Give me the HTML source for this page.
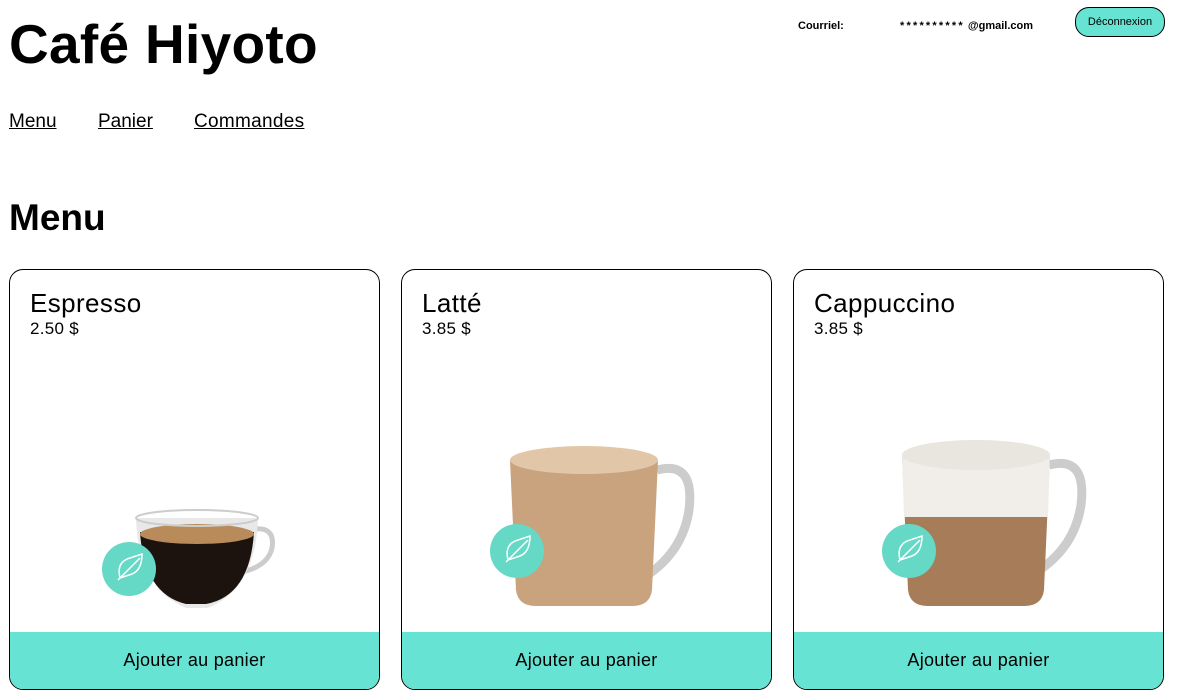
<!DOCTYPE html>
<html><head><meta charset="utf-8"><style>
body{margin:0;background:#fff;font-family:"Liberation Sans",Arial,sans-serif;color:#000;width:1200px;height:700px;overflow:hidden;position:relative}
h1{position:absolute;left:9px;top:12px;margin:0;font-size:55px;font-weight:bold;letter-spacing:0.3px}
.nav{position:absolute;top:111px;left:9px;font-size:19px}
.nav a{color:#000;text-decoration:underline;position:absolute;white-space:nowrap}
h2{position:absolute;left:9px;top:197px;margin:0;font-size:37px;font-weight:bold}
.top{position:absolute;top:20px;font-size:11px;font-weight:bold}
.btn{position:absolute;left:1075px;top:7px;width:88px;height:28px;border:1px solid #000;border-radius:14px;background:#66e3d2;font-size:11px;text-align:center;line-height:28px}
.card{position:absolute;top:269px;width:369px;height:419px;border:1px solid #000;border-radius:14px;overflow:hidden}
.card .n{position:absolute;left:20px;top:18px;font-size:26px;letter-spacing:0.4px}
.card .p{position:absolute;left:20px;top:49px;font-size:17px;letter-spacing:0.3px}
.card .b{position:absolute;left:0;right:0;bottom:0;height:57px;background:#66e3d2;text-align:center;line-height:56px;font-size:18px;letter-spacing:0.3px}
.card svg{position:absolute;left:0;top:0}
</style></head><body>
<h1>Café Hiyoto</h1>
<div class="nav"><a style="left:0">Menu</a><a style="left:89px">Panier</a><a style="left:185px;letter-spacing:0.3px">Commandes</a></div>
<h2>Menu</h2>
<div class="top" style="left:798px">Courriel:</div>
<div class="top" style="left:900px"><span style="letter-spacing:2.2px">**********</span> @gmail.com</div>
<div class="btn">Déconnexion</div>

<div class="card" style="left:9px"><div class="n">Espresso</div><div class="p">2.50 $</div>
<svg width="369" height="363">
<path d="M238 260 q28-6 24 18 q-4 18 -30 24" fill="none" stroke="#ccc" stroke-width="5"/>
<path d="M126 248 h122 q-2 70 -50 90 h-22 q-48 -20 -50 -90z" fill="#e8e8e8"/>
<path d="M130 262 h114 q-4 64 -48 72 h-20 q-42 -10 -46 -72z" fill="#1c130e"/>
<ellipse cx="187" cy="264" rx="57" ry="10" fill="#b98a5a"/>
<ellipse cx="187" cy="248" rx="61" ry="8" fill="none" stroke="#ccc" stroke-width="2"/>
<circle cx="119" cy="299" r="27" fill="#66d8c6"/>
<path d="M108 310 l22-22 M110 308 q-4-16 10-20 l12-4 q0 16 -10 20z" fill="none" stroke="#fff" stroke-width="1.5"/>
</svg><div class="b">Ajouter au panier</div></div>

<div class="card" style="left:401px"><div class="n">Latté</div><div class="p">3.85 $</div>
<svg width="369" height="363">
<path d="M255 200 q38-10 32 40 q-6 40 -40 64" fill="none" stroke="#ccc" stroke-width="9"/>
<path d="M108 190 h148 l-6 130 q-2 16 -20 16 h-96 q-18 0 -20 -16z" fill="#c9a27e"/>
<ellipse cx="182" cy="190" rx="74" ry="14" fill="#e2c6a8"/>
<circle cx="115" cy="281" r="27" fill="#66d8c6"/>
<path d="M104 292 l22-22 M106 290 q-4-16 10-20 l12-4 q0 16 -10 20z" fill="none" stroke="#fff" stroke-width="1.5"/>
</svg><div class="b">Ajouter au panier</div></div>

<div class="card" style="left:793px"><div class="n">Cappuccino</div><div class="p">3.85 $</div>
<svg width="369" height="363">
<path d="M255 195 q38-10 32 40 q-6 40 -40 64" fill="none" stroke="#ccc" stroke-width="9"/>
<path d="M108 185 h148 l-6 135 q-2 16 -20 16 h-96 q-18 0 -20 -16z" fill="#a77c58"/>
<path d="M108 185 h148 l-2 62 h-144z" fill="#f1eeea"/>
<ellipse cx="182" cy="185" rx="74" ry="15" fill="#e9e5df"/>
<circle cx="115" cy="281" r="27" fill="#66d8c6"/>
<path d="M104 292 l22-22 M106 290 q-4-16 10-20 l12-4 q0 16 -10 20z" fill="none" stroke="#fff" stroke-width="1.5"/>
</svg><div class="b">Ajouter au panier</div></div>
</body></html>
